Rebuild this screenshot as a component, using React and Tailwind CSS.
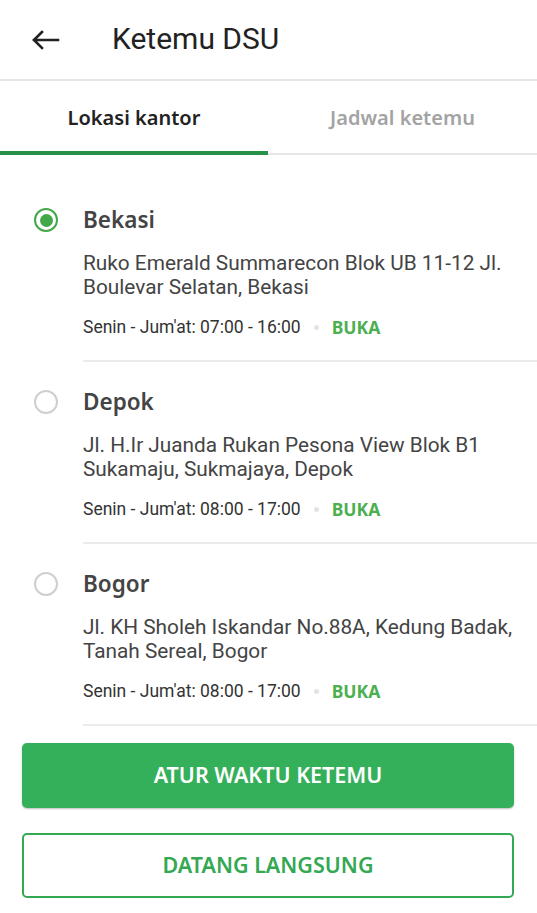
import React from "react";

const items = [
  {
    name: "Bekasi",
    addr: ["Ruko Emerald Summarecon Blok UB 11-12 Jl.", "Boulevar Selatan, Bekasi"],
    hours: "Senin - Jum'at: 07:00 - 16:00",
    selected: true,
  },
  {
    name: "Depok",
    addr: ["Jl. H.Ir Juanda Rukan Pesona View Blok B1", "Sukamaju, Sukmajaya, Depok"],
    hours: "Senin - Jum'at: 08:00 - 17:00",
  },
  {
    name: "Bogor",
    addr: ["Jl. KH Sholeh Iskandar No.88A, Kedung Badak,", "Tanah Sereal, Bogor"],
    hours: "Senin - Jum'at: 08:00 - 17:00",
  },
];

const head = { fontFamily: '"Noto Sans", "Open Sans", sans-serif' };
const body = { fontFamily: 'Roboto, "Noto Sans", sans-serif' };

export default function App() {
  return (
    <div className="w-[537px] h-[913px] bg-white overflow-hidden flex flex-col" style={body}>
      <div className="h-[81px] flex items-center border-b-2 border-[#e6e6e6]">
        <svg width="30" height="24" viewBox="0 0 30 24" className="ml-[31px] mt-[1px]">
          <path d="M3 12H27M3 12L11 4M3 12L11 20" stroke="#222" strokeWidth="2.6" fill="none" strokeLinecap="square" />
        </svg>
        <span className="ml-[51px] text-[30px] text-[#222] leading-none mt-[-2px]">Ketemu DSU</span>
      </div>
      <div className="h-[74px] flex border-b-2 border-[#e6e6e6]" style={head}>
        <div className="w-[268px] flex items-center justify-center border-b-[4px] border-[#27914a] mb-[-2px] pt-[3px]">
          <span className="text-[20px] font-semibold text-[#222] tracking-[0px]">Lokasi kantor</span>
        </div>
        <div className="flex-1 flex items-center justify-center pt-[1px]">
          <span className="text-[20px] font-semibold text-[#a3a3a3]">Jadwal ketemu</span>
        </div>
      </div>
      <div className="pt-[25px] flex-1">
        {items.map((it) => (
          <div key={it.name} className="flex">
            <div className="w-[83px] flex pl-[34px] pt-[28px]">
              {it.selected ? (
                <div className="w-[24px] h-[24px] rounded-full border-[2.5px] border-[#43a84a] flex items-center justify-center">
                  <div className="w-[13px] h-[13px] rounded-full bg-[#43a84a]" />
                </div>
              ) : (
                <div className="w-[24px] h-[24px] rounded-full border-[2px] border-[#cfcfcf]" />
              )}
            </div>
            <div className="flex-1 border-b-2 border-[#ebebeb] pt-[26px] pb-[23px]">
              <div className="h-[28px] flex items-center text-[22.5px] font-semibold text-[#444]" style={head}>
                {it.name}
              </div>
              <div className="mt-[17px] text-[20.8px] leading-[24px] text-[#444]">
                {it.addr.map((l) => (
                  <div key={l}>{l}</div>
                ))}
              </div>
              <div className="mt-[18px] h-[20px] flex items-center text-[17.5px] text-[#333]">
                <span>{it.hours}</span>
                <span className="mx-[13px] w-[5px] h-[5px] rounded-full bg-[#e3e3e3]" />
                <span className="font-bold text-[#4caf50]" style={head}>BUKA</span>
              </div>
            </div>
          </div>
        ))}
      </div>
      <div className="px-[22px] pb-[15px] flex flex-col gap-[25px] mt-auto" style={head}>
        <button className="h-[65px] rounded-[5px] bg-[#34b05a] text-white text-[21.5px] font-semibold shadow-[0_1px_2px_rgba(0,0,0,0.25)] w-[492px]">
          ATUR WAKTU KETEMU
        </button>
        <button className="h-[65px] rounded-[5px] border-2 border-[#34a853] text-[#34a853] text-[21.5px] font-semibold w-[492px] bg-white">
          DATANG LANGSUNG
        </button>
      </div>
    </div>
  );
}
